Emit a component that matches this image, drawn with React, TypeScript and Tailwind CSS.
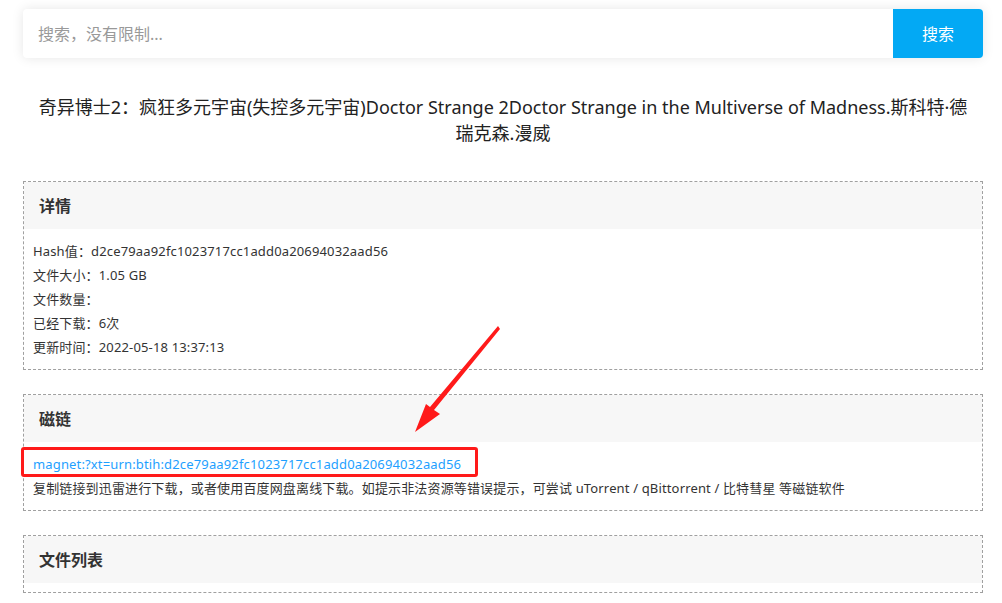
import React from 'react';

const font = { fontFamily: '"Noto Sans", "Noto Sans CJK SC", sans-serif' };

const Panel: React.FC<{ title: string; children?: React.ReactNode }> = ({ title, children }) => (
  <div className="border border-dashed border-[#a0a0a0] mb-[24px]">
    <div className="bg-[#f7f7f7] h-[47px] flex items-center pl-[15px] text-[16px] font-bold text-[#333]">{title}</div>
    {children ? (
      <div className="px-[9px] pt-[10px] pb-[10px] text-[13px] leading-[24px] tracking-[0.15px] text-[#333]">{children}</div>
    ) : (
      <div className="h-[9px]" />
    )}
  </div>
);

const App: React.FC = () => {
  return (
    <div className="bg-white min-h-[603px] relative" style={font}>
      <div className="w-[960px] ml-[23px] pt-[9px]">
        {/* search */}
        <div className="flex h-[49px] rounded-[4px] bg-white shadow-[0_0_12px_rgba(0,0,0,0.1)]">
          <input
            className="flex-1 px-[15px] text-[16px] text-[#333] placeholder:text-[#999] outline-none rounded-l-[4px]"
            placeholder="搜索，没有限制..."
            style={font}
          />
          <button className="w-[90px] bg-[#03a9f4] text-white text-[16px] rounded-r-[4px]">搜索</button>
        </div>

        {/* title */}
        <h1 className="mt-[36px] mb-[35px] px-[10px] text-center text-[18px] leading-[26px] text-[#222]">
          奇异博士2：疯狂多元宇宙(失控多元宇宙)Doctor Strange 2Doctor Strange in the Multiverse of Madness.斯科特·德瑞克森.漫威
        </h1>

        <Panel title="详情">
          <div>Hash值：d2ce79aa92fc1023717cc1add0a20694032aad56</div>
          <div>文件大小：1.05 GB</div>
          <div>文件数量：</div>
          <div>已经下载：6次</div>
          <div>更新时间：2022-05-18 13:37:13</div>
        </Panel>

        <Panel title="磁链">
          <div>
            <a className="text-[#1e9fff]" href="#">magnet:?xt=urn:btih:d2ce79aa92fc1023717cc1add0a20694032aad56</a>
          </div>
          <div>复制链接到迅雷进行下载，或者使用百度网盘离线下载。如提示非法资源等错误提示，可尝试 uTorrent / qBittorrent / 比特彗星 等磁链软件</div>
        </Panel>

        <Panel title="文件列表" />
      </div>

      {/* annotation: red box around the link */}
      <div className="absolute left-[21px] top-[447px] w-[457px] h-[30px] border-[3px] border-[#ff1a1a] rounded-[3px] pointer-events-none" />

      {/* annotation: red arrow */}
      <svg className="absolute left-0 top-0 pointer-events-none" width="1002" height="603">
        <polygon points="498,326 500,329 434,410 440,414 415,432 426,404 430,407" fill="#ff1a1a" />
      </svg>
    </div>
  );
};

export default App;
